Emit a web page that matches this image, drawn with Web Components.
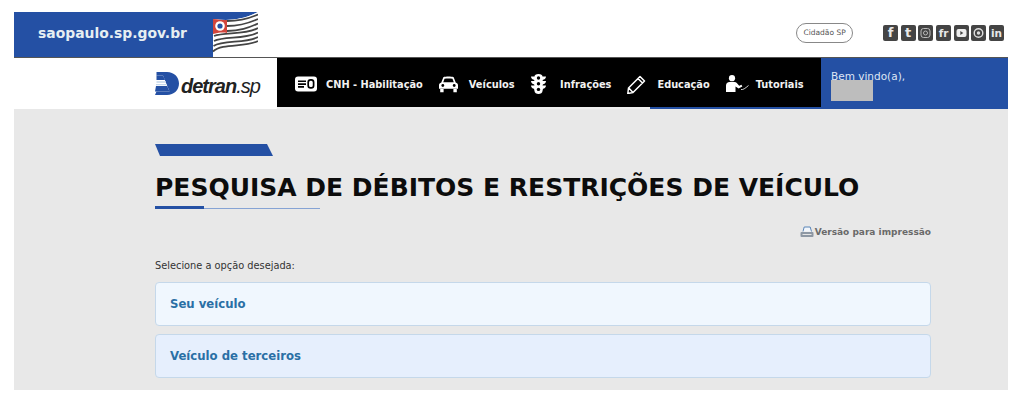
<!DOCTYPE html>
<html lang="pt-BR">
<head>
<meta charset="utf-8">
<title>Pesquisa de débitos</title>
<style>
  html, body { margin: 0; background: #fff; }
  body { font-family: "DejaVu Sans", Verdana, sans-serif; padding: 0 16px 11px 14px; }
</style>
</head>
<body>
<sp-header></sp-header>
<sp-nav>
  <nav-item label="CNH - Habilitação" slotw="31">
    <svg width="22" height="16" viewBox="0 0 22 16"><rect width="22" height="15" y=".5" rx="3" fill="#fff"/><path d="M3 4.500h8v1.600H3zM3 7.300h8v1.600H3zM3 10.100h6v1.600H3z" fill="#000"/><rect x="13.200" y="3.800" width="5.400" height="8" rx="2.400" fill="none" stroke="#000" stroke-width="1.700"/></svg>
  </nav-item>
  <nav-item label="Veículos" slotw="30">
    <svg width="19" height="17" viewBox="0 0 19 17"><path d="M4.300 1.200C7 .4 12 .4 14.700 1.200l2 5.200c1.400.5 2.300 1.400 2.300 2.800v3.600H0V9.200c0-1.400.9-2.300 2.300-2.800z" fill="#fff"/><path d="M5.500 2.800c2.500-.5 5.500-.5 8 0l1.300 3.500H4.200z" fill="#000"/><circle cx="3.800" cy="9.500" r="1.400"/><circle cx="15.200" cy="9.500" r="1.400"/><path d="M1.200 13h3.400v3.200H1.200zM14.400 13h3.400v3.200h-3.400z" fill="#fff"/></svg>
  </nav-item>
  <nav-item label="Infrações" slotw="29.500">
    <svg width="15" height="20" viewBox="0 0 15 20"><path d="M3.500 2.500C3.500 1 5 0 7.500 0S11.500 1 11.500 2.500H15C15 4.500 13.500 5.500 12 5.800L11.500 7H15C15 9 13.500 10 12 10.300L11.500 11.500H15C15 13.500 13.500 14.500 12 14.800L11.500 17C11.500 19 9.500 20 7.500 20S3.500 19 3.500 17L3 14.800C1.500 14.500 0 13.500 0 11.500H3.500L3 10.300C1.500 10 0 9 0 7H3.500L3 5.800C1.500 5.500 0 4.500 0 2.500Z" fill="#fff"/><circle cx="7.500" cy="4" r="1.700"/><circle cx="7.500" cy="9.700" r="1.700"/><circle cx="7.500" cy="15.400" r="1.700"/></svg>
  </nav-item>
  <nav-item label="Educação" slotw="30">
    <svg width="19" height="19" viewBox="0 0 19 19"><path d="M13 1.500l4.500 4.500L6 17.500l-5.200 1 .7-5.500zM11 3.500L15.500 8M1.800 13l4.200 4.500" fill="none" stroke="#fff" stroke-width="1.500" stroke-linejoin="round"/></svg>
  </nav-item>
  <nav-item label="Tutoriais" slotw="30">
    <svg width="23" height="18" viewBox="0 0 23 18"><circle cx="6" cy="3.200" r="3.100" fill="#fff"/><path d="M0 17v-6.500C0 8.500 1.500 7 3.500 7h5c1 0 1.700.4 2.300 1.100l2.400 2.700 2.300-1 .8 1.600-3.700 2.200-3.100-2V17z" fill="#fff"/><path d="M15 14.500c2 .5 4-1 7.500-4" fill="none" stroke="#fff" stroke-width=".8"/></svg>
  </nav-item>
</sp-nav>
<sp-main></sp-main>
<script>
class SpHeader extends HTMLElement {
  constructor() {
    super();
    this.attachShadow({ mode: 'open' });
  }
  connectedCallback() {
    this.shadowRoot.innerHTML = `
      <style>
        :host { display: flex; height: 57px; padding-top: 12px; box-sizing: border-box; justify-content: space-between; align-items: flex-start; }
        .banner { position: relative; width: 244px; height: 45px; }
        .banner svg { display: block; }
        .site { position: absolute; left: 24px; top: 12px; color: #e6eef2; font-weight: bold; font-size: 13.900px; line-height: 18px; }
        .right { display: flex; align-items: center; padding: 11px 4px 0 0; }
        .cid { width: 57px; height: 20px; box-sizing: border-box; border: 1px solid #888; border-radius: 10px; font-size: 7.500px; line-height: 18px; text-align: center; color: #555; margin-right: 30px; }
        .soc { display: flex; gap: 2.660px; }
        .soc span { width: 15px; height: 16px; border-radius: 2px; background: #444; color: #e8e8e8; font: bold 13px/16px "DejaVu Sans", sans-serif; text-align: center; display: block; overflow: hidden; }
        .soc svg { display: block; }
      </style>
      <div class="banner">
        <svg width="244" height="45" viewBox="0 0 244 45">
          <path d="M0 0H244C228 8 215 9 199 7V45H0Z" fill="#2450a4"/>
          <path d="M199 7C215 9 228 8 244 0V30C228 36 204 32 199 45Z" fill="#fff"/>
          <g fill="none" stroke="#444" stroke-width="1.800">
            <path d="M213 9C226 9 234 7 244 2.500"/>
            <path d="M213 14C226 14 234 11.500 244 7"/>
            <path d="M213 19C226 19 234 16 244 11.500"/>
            <path d="M200 24C210 20 232 23 244 16"/>
            <path d="M200 29C210 24 232 27.500 244 20.500"/>
            <path d="M199.500 34C209 28 232 31.500 244 25"/>
            <path d="M199 39.500C208 31 232 35.500 244 29"/>
          </g>
          <path d="M199 7C204 7.500 208 8 213 8V21C208 20 203 21 199 22Z" fill="#d2453c"/>
          <circle cx="206" cy="14" r="4.800" fill="#fff"/>
          <circle cx="206" cy="14" r="2.600" fill="#2450a4"/>
        </svg>
        <div class="site">saopaulo.sp.gov.br</div>
      </div>
      <div class="right">
        <div class="cid">Cidadão SP</div>
        <div class="soc">
          <span>f</span>
          <span>t</span>
          <span><svg width="15" height="16" viewBox="0 0 15 16"><rect x="3" y="3.500" width="9" height="9" rx="2.500" fill="none" stroke="#bbb"/><circle cx="7.500" cy="8" r="2" fill="none" stroke="#bbb"/></svg></span>
          <span style="font-size:10.500px">fr</span>
          <span><svg width="15" height="16" viewBox="0 0 15 16"><rect x="2.500" y="4" width="10" height="8" rx="2" fill="#eee"/><path d="M6.300 6l3 2-3 2z" fill="#444"/></svg></span>
          <span><svg width="15" height="16" viewBox="0 0 15 16"><circle cx="7.500" cy="8" r="4.300" fill="none" stroke="#ddd" stroke-width="1.400"/><circle cx="7.500" cy="8" r="1.700" fill="#ddd"/></svg></span>
          <span style="font-size:10.500px">in</span>
        </div>
      </div>
    `;
  }
}

class NavItem extends HTMLElement {
  constructor() {
    super();
    this.attachShadow({ mode: 'open' });
  }
  connectedCallback() {
    const w = this.getAttribute('slotw');
    this.shadowRoot.innerHTML = `
      <style>
        :host { display: flex; align-items: center; margin-right: 16px; }
        .ic { width: ${w}px; display: flex; align-items: center; }
        .t { color: #f2f2f2; font-weight: bold; font-size: 9.800px; white-space: nowrap; }
      </style>
      <div class="ic"><slot></slot></div>
      <div class="t">${this.getAttribute('label')}</div>
    `;
  }
}

class SpNav extends HTMLElement {
  constructor() {
    super();
    this.attachShadow({ mode: 'open' });
  }
  connectedCallback() {
    this.shadowRoot.innerHTML = `
      <style>
        :host { display: grid; grid-template-columns: 263px 544px 187px; height: 52px; border-top: 1px solid #555; box-sizing: border-box; }
        .logo { background: #fff; display: flex; align-items: center; padding: 0 0 0 141px; gap: 2px; }
        .logo span { font: italic bold 20px/24px "Liberation Sans", sans-serif; color: #222; letter-spacing: -1px; margin-top: 4px; }
        .logo span i { font-weight: normal; }
        .menu { background: #000; display: flex; align-items: center; padding: 3px 0 0 18px; box-sizing: border-box; border-bottom: 2px solid; border-image: linear-gradient(90deg, #eee 0 373px, #2450a4 373px) 1; }
        .user { background: #2450a4; color: #dfe7f5; font-size: 10.500px; line-height: 13px; padding: 12px 0 0 10px; }
        .user div { width: 42px; height: 21px; background: #bdbdbd; margin-top: -3px; }
      </style>
      <div class="logo">
        <svg width="24" height="23" viewBox="0 0 24 23"><path d="M1.500 0H12C19 0 24 5 24 11.500S19 23 12 23H0L1.500 19.500H14.500L8 3.500H1.500Z" fill="#2450a4"/><path d="M1.500 3.500H8L10 8H1.500ZM1 14H12.200L14.500 19.500H0Z" fill="#2450a4"/><path d="M1.500 10H11M1 12.700H12" stroke="#c3d6ea" stroke-width="1.300"/></svg>
        <span>detran<i>.sp</i></span>
      </div>
      <div class="menu"><slot></slot></div>
      <div class="user">Bem vindo(a),<div></div></div>
    `;
  }
}

class OptionRow extends HTMLElement {
  constructor() {
    super();
    this.attachShadow({ mode: 'open' });
  }
  connectedCallback() {
    this.shadowRoot.innerHTML = `
      <style>
        :host { display: flex; align-items: center; height: 44px; box-sizing: border-box; padding-left: 14px; border: 1px solid #c5d8ea; border-radius: 4px; background: var(--row-bg, #f0f7fe); color: #2a6fa5; font-weight: bold; font-size: 11.700px; }
      </style>
      <slot></slot>
    `;
  }
}

class SpMain extends HTMLElement {
  constructor() {
    super();
    this.attachShadow({ mode: 'open' });
  }
  connectedCallback() {
    this.shadowRoot.innerHTML = `
      <style>
        :host { display: block; background: #e8e8e8; height: 281px; box-sizing: border-box; padding: 35px 77px 0 141px; }
        .tag { width: 118px; height: 12px; background: #2450a4; clip-path: polygon(0 0, 112px 0, 100% 100%, 5px 100%); }
        h1 { margin: 17px 0 0; font-size: 25px; line-height: 30px; font-weight: bold; color: #0c0c0c; white-space: nowrap; }
        .rule { margin-top: 3px; width: 165px; height: 3px; display: flex; align-items: flex-end; }
        .rule b { width: 49px; height: 3px; background: #2450a4; }
        .rule i { flex: 1; height: 1px; background: #86a3d4; }
        .print { display: flex; justify-content: flex-end; align-items: center; gap: 1px; margin-top: 16px; font-size: 9px; line-height: 14px; font-weight: bold; color: #6a6a6a; }
        .sel { margin-top: 20px; font-size: 9.800px; line-height: 14px; color: #333; }
        .rows { display: flex; flex-direction: column; gap: 8px; margin-top: 9px; }
        .second { --row-bg: #e6effd; }
      </style>
      <div class="tag"></div>
      <h1>PESQUISA DE DÉBITOS E RESTRIÇÕES DE VEÍCULO</h1>
      <div class="rule"><b></b><i></i></div>
      <div class="print">
        <svg width="14" height="12" viewBox="0 0 14 12"><path d="M3 5.500L4.200 1h6L11.500 5.500" fill="#f2f6fb" stroke="#5b86b8"/><rect x=".5" y="6" width="13" height="5" rx="1" fill="#8d97a3"/><path d="M2.500 8.500h9" stroke="#e4e4e4"/></svg>
        <span>Versão para impressão</span>
      </div>
      <div class="sel">Selecione a opção desejada:</div>
      <div class="rows">
        <option-row>Seu veículo</option-row>
        <option-row class="second">Veículo de terceiros</option-row>
      </div>
    `;
  }
}

customElements.define('sp-header', SpHeader);
customElements.define('nav-item', NavItem);
customElements.define('sp-nav', SpNav);
customElements.define('option-row', OptionRow);
customElements.define('sp-main', SpMain);
</script>
</body>
</html>
